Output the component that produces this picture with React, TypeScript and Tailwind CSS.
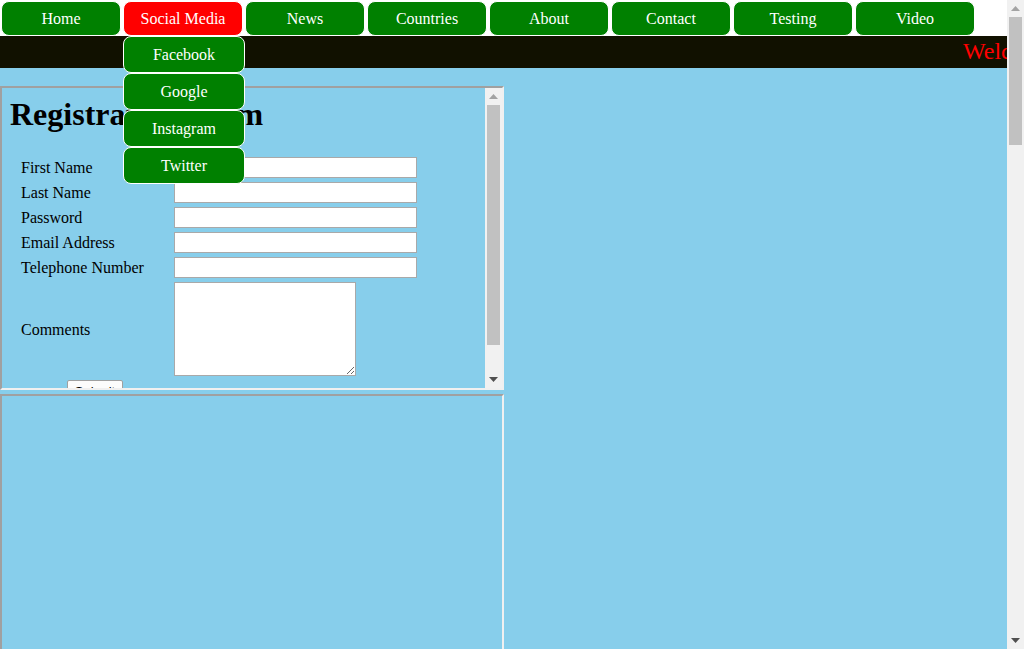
import React from "react"

const navItems = ["Home", "Social Media", "News", "Countries", "About", "Contact", "Testing", "Video"]
const socialItems = ["Facebook", "Google", "Instagram", "Twitter"]
const fields = ["First Name", "Last Name", "Password", "Email Address", "Telephone Number"]

const Arrow: React.FC<{ up?: boolean; color: string }> = ({ up, color }) => (
  <svg width="9" height="5" viewBox="0 0 9 5">
    <polygon points={up ? "4.5,0 9,5 0,5" : "0,0 9,0 4.5,5"} fill={color} />
  </svg>
)

const Scrollbar: React.FC<{ thumbTop: number; thumbHeight: number }> = ({ thumbTop, thumbHeight }) => (
  <div className="relative w-[17px] shrink-0 self-stretch bg-[#f1f1f1]">
    <div className="absolute left-0 top-[6px] flex w-[17px] justify-center">
      <Arrow up color="#a3a3a3" />
    </div>
    <div
      className="absolute left-[2px] w-[13px] bg-[#c1c1c1]"
      style={{ top: thumbTop, height: thumbHeight }}
    />
    <div className="absolute bottom-[6px] left-0 flex w-[17px] justify-center">
      <Arrow color="#505050" />
    </div>
  </div>
)

const App: React.FC = () => {
  return (
    <div className="flex h-[649px] w-[1024px] overflow-hidden bg-[#87ceeb] font-['Liberation_Serif',serif] text-[16px]">
      <div className="relative flex min-w-0 flex-1 flex-col">
        {/* nav */}
        <div className="flex h-[36px] shrink-0 gap-[2px] bg-white pl-[1px] pt-[1px]">
          {navItems.map((item) => (
            <div
              key={item}
              className={`flex h-[35px] w-[120px] shrink-0 items-center justify-center rounded-lg border border-white text-white ${
                item === "Social Media" ? "bg-[#ff0000]" : "bg-[#008000]"
              }`}
            >
              {item}
            </div>
          ))}
        </div>

        {/* marquee bar */}
        <div className="h-[32px] shrink-0 overflow-hidden whitespace-nowrap bg-[#111100] pl-[963px] text-[24px] leading-[30px] text-[#ff0000]">
          Welcome to my website
        </div>

        <div className="h-[18px] shrink-0" />

        {/* iframe: registration form */}
        <div className="flex h-[304px] w-[504px] shrink-0 border-2 border-b-[#f0f0f0] border-l-[#a0a0a0] border-r-[#f0f0f0] border-t-[#a0a0a0]">
          <div className="min-w-0 flex-1 overflow-hidden pl-[8px] pt-[8px] text-black">
            <h1 className="text-[32px] font-bold leading-[37px]">Registration Form</h1>
            <div className="mt-[24px] flex flex-col gap-[4px]">
              {fields.map((f) => (
                <div key={f} className="flex h-[21px] items-center">
                  <span className="w-[164px] pl-[11px] leading-[21px]">{f}</span>
                  <input
                    type="text"
                    className="h-[21px] w-[243px] border border-[#a9a9a9] bg-white"
                  />
                </div>
              ))}
              <div className="flex h-[94px] items-center">
                <span className="w-[164px] pl-[11px] leading-[21px]">Comments</span>
                <textarea className="block h-[94px] w-[182px] resize border border-[#a9a9a9] bg-white" />
              </div>
              <div className="flex h-[22px] pl-[57px]">
                <button className="h-[22px] w-[56px] rounded-[2px] border border-[#a0a0a0] bg-[#fcfcfc] pt-[1px] font-['Liberation_Sans',sans-serif] text-[13px] leading-[18px] text-black">
                  Submit
                </button>
              </div>
            </div>
          </div>
          <Scrollbar thumbTop={17} thumbHeight={240} />
        </div>

        <div className="h-[4px] shrink-0" />

        {/* iframe: empty */}
        <div className="h-[300px] w-[504px] shrink-0 border-2 border-b-[#f0f0f0] border-l-[#a0a0a0] border-r-[#f0f0f0] border-t-[#a0a0a0]" />

        {/* dropdown */}
        <div className="absolute left-[123px] top-[36px] flex flex-col">
          {socialItems.map((s) => (
            <div
              key={s}
              className="flex h-[37px] w-[122px] items-center justify-center rounded-lg border border-white bg-[#008000] text-white"
            >
              {s}
            </div>
          ))}
        </div>
      </div>

      <Scrollbar thumbTop={17} thumbHeight={128} />
    </div>
  )
}

export default App
